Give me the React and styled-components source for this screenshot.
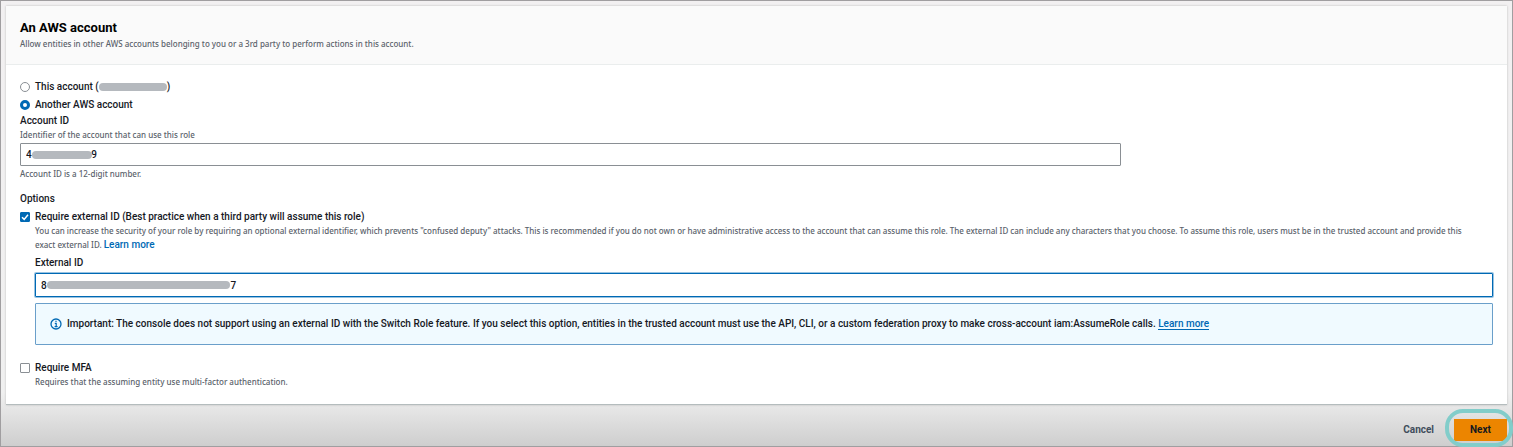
import React, { useState } from 'react'
import styled, { createGlobalStyle } from 'styled-components'

const COLORS = {
    text: '#16191f',
    secondary: '#5a626b',
    blue: '#0069b4',
    border: '#8a8f94',
    mask: '#b5b9be',
}

const FONTS = {
    body: "Roboto, 'Liberation Sans', sans-serif",
    small: "'Noto Sans', 'Open Sans', sans-serif",
}

const GlobalStyle = createGlobalStyle`
    * {
        box-sizing: border-box;
    }
    body {
        margin: 0;
        color: ${COLORS.text};
        font-family: ${FONTS.body};
        font-size: 10px;
        font-weight: 500;
        line-height: 14px;
    }
`

const Page = styled.div`
    display: flex;
    flex-direction: column;
    min-height: 100vh;
    padding: 5px 5px 0;
    border: 1px solid #a09ea0;
    background: linear-gradient(#f2f0f1 0, #f0f0f0 88%, #cecece 100%);
`

const Panel = styled.section`
    background: #fff;
    border-bottom: 1px solid #b4bcbd;
    box-shadow: 0 0 2px #bbb;
`

const PanelHeader = styled.header`
    padding: 14px 14px 12px;
    background: #fafafa;
    border-bottom: 1px solid #eaeded;
`

const Title = styled.h2`
    margin: 0;
    font-size: 13px;
    font-weight: 700;
    line-height: 16px;
    color: #000;
`

const Description = styled.p`
    margin: 0;
    padding-right: 20px;
    color: ${COLORS.secondary};
    font-family: ${FONTS.small};
    font-size: 8px;
    line-height: ${props => (props.$tall ? '16px' : '14px')};
`

const PanelBody = styled.div`
    padding: 15px 14px 15px;
`

const RadioGroup = styled.div`
    display: flex;
    flex-direction: column;
    gap: 4px;
    margin-bottom: 2px;
`

const Choice = styled.label`
    display: flex;
    align-items: center;
    gap: 5px;
`

const Radio = styled.input`
    appearance: none;
    flex: none;
    width: 10px;
    height: 10px;
    margin: 0;
    border: 1px solid ${COLORS.border};
    border-radius: 50%;
    background: #fff;
    &:checked {
        border: 3px solid ${COLORS.blue};
    }
`

const CheckWrapper = styled.span`
    display: grid;
    flex: none;
    > * {
        grid-area: 1 / 1;
    }
`

const CheckInput = styled.input`
    appearance: none;
    width: 10px;
    height: 10px;
    margin: 0;
    border: 1px solid ${COLORS.border};
    border-radius: 1px;
    background: #fff;
    &:checked {
        border-color: ${COLORS.blue};
        background: ${COLORS.blue};
    }
`

const Account = styled.span`
    display: flex;
    align-items: center;
`

const Mask = styled.span`
    width: ${props => props.$width}px;
    height: 8px;
    border-radius: 4px;
    background: ${COLORS.mask};
`

const Label = styled.label`
    display: block;
`

const InputWrapper = styled.div`
    position: relative;
    width: ${props => (props.$narrow ? 'calc(75% - 4px)' : '100%')};
    margin-top: ${props => (props.$narrow ? '1px' : '3px')};
    ${Mask} {
        position: absolute;
        top: 8px;
        left: 12px;
    }
`

const TextInput = styled.input`
    display: block;
    width: 100%;
    height: ${props => (props.$active ? '24px' : '23px')};
    padding: 0 5px;
    border: 1px solid ${props => (props.$active ? COLORS.blue : COLORS.border)};
    border-radius: 1px;
    box-shadow: ${props => (props.$active ? `0 0 0 1px ${COLORS.blue}66` : 'none')};
    background: #fff;
    color: ${COLORS.text};
    font: inherit;
    outline: none;
`

const Options = styled.div`
    margin: 10px 0 4px;
`

const Indented = styled.div`
    padding-left: 15px;
`

const ExternalId = styled.div`
    margin-top: 4px;
`

const Link = styled.a`
    color: ${COLORS.blue};
    font-family: ${FONTS.body};
    font-size: 10px;
    line-height: 12px;
    text-decoration: none;
    border-bottom: ${props => (props.$underlined ? `1px solid ${COLORS.blue}` : 'none')};
`

const Alert = styled.div`
    display: flex;
    align-items: center;
    gap: 5px;
    min-height: 42px;
    margin: 6px 0 16px;
    padding: 0 14px;
    border: 1px solid #6a9fca;
    border-radius: 1px;
    background: #f0faff;
    svg {
        flex: none;
    }
`

const Footer = styled.footer`
    display: flex;
    justify-content: flex-end;
    align-items: center;
    gap: 20px;
    padding-top: 14px;
`

const Button = styled.button`
    height: 22px;
    padding: 0;
    border: 0;
    background: transparent;
    color: #414d5c;
    font: inherit;
    font-weight: 700;
`

const PrimaryButton = styled(Button)`
    width: 53px;
    background: #ec8500;
    color: #16191f;
`

const Highlight = styled.div`
    position: relative;
    &::after {
        content: '';
        position: absolute;
        top: -10px;
        right: -6px;
        bottom: -6px;
        left: -9px;
        border: 4px solid #82cdca;
        border-radius: 18px;
        pointer-events: none;
    }
`

function Checkbox(props) {
    return (
        <CheckWrapper>
            <CheckInput type="checkbox" {...props} />
            {props.checked && (
                <svg width="10" height="10" viewBox="0 0 10 10" fill="none" pointerEvents="none">
                    <path d="M2 5.2 4.2 7.4 8 2.8" stroke="#fff" strokeWidth="1.5" />
                </svg>
            )}
        </CheckWrapper>
    )
}

function InfoIcon() {
    return (
        <svg width="12" height="12" viewBox="0 0 12 12" fill="none" stroke={COLORS.blue}>
            <circle cx="6" cy="6" r="5" strokeWidth="1.3" />
            <path d="M6 2.7v1.4M4.8 5.4H6.2V8.3M4.6 8.6h3" strokeWidth="1.2" />
        </svg>
    )
}

const blank = count => '\u00a0'.repeat(count)

function App() {
    const [account, setAccount] = useState('another')
    const [accountId, setAccountId] = useState(`4${blank(24)}9`)
    const [requireId, setRequireId] = useState(true)
    const [externalId, setExternalId] = useState(`8${blank(74)}7`)
    const [requireMfa, setRequireMfa] = useState(false)

    return (
        <>
            <GlobalStyle />
            <Page>
                <Panel>
                    <PanelHeader>
                        <Title>An AWS account</Title>
                        <Description $tall>
                            Allow entities in other AWS accounts belonging to you or a 3rd party to perform actions in this account.
                        </Description>
                    </PanelHeader>
                    <PanelBody>
                        <RadioGroup>
                            <Choice>
                                <Radio type="radio" name="account" checked={account === 'this'} onChange={() => setAccount('this')} />
                                <Account>This account (<Mask $width={68} />)</Account>
                            </Choice>
                            <Choice>
                                <Radio type="radio" name="account" checked={account === 'another'} onChange={() => setAccount('another')} />
                                Another AWS account
                            </Choice>
                        </RadioGroup>
                        <Label htmlFor="account-id">Account ID</Label>
                        <Description>Identifier of the account that can use this role</Description>
                        <InputWrapper $narrow>
                            <TextInput id="account-id" value={accountId} onChange={e => setAccountId(e.target.value)} />
                            <Mask $width={60} />
                        </InputWrapper>
                        <Description $tall>Account ID is a 12-digit number.</Description>
                        <Options>Options</Options>
                        <Choice>
                            <Checkbox checked={requireId} onChange={e => setRequireId(e.target.checked)} />
                            Require external ID (Best practice when a third party will assume this role)
                        </Choice>
                        <Indented>
                            <Description>
                                You can increase the security of your role by requiring an optional external identifier, which prevents "confused deputy" attacks. This is recommended if you do not own or have administrative access to the account that can assume this role. The external ID can include any characters that you choose. To assume this role, users must be in the trusted account and provide this exact external ID. <Link href="#">Learn more</Link>
                            </Description>
                            <ExternalId>
                                <Label htmlFor="external-id">External ID</Label>
                                <InputWrapper>
                                    <TextInput id="external-id" $active value={externalId} onChange={e => setExternalId(e.target.value)} />
                                    <Mask $width={183} />
                                </InputWrapper>
                            </ExternalId>
                            <Alert>
                                <InfoIcon />
                                <span>
                                    Important: The console does not support using an external ID with the Switch Role feature. If you select this option, entities in the trusted account must use the API, CLI, or a custom federation proxy to make cross-account iam:AssumeRole calls. <Link href="#" $underlined>Learn more</Link>
                                </span>
                            </Alert>
                        </Indented>
                        <Choice>
                            <Checkbox checked={requireMfa} onChange={e => setRequireMfa(e.target.checked)} />
                            Require MFA
                        </Choice>
                        <Indented>
                            <Description>Requires that the assuming entity use multi-factor authentication.</Description>
                        </Indented>
                    </PanelBody>
                </Panel>
                <Footer>
                    <Button type="button">Cancel</Button>
                    <Highlight>
                        <PrimaryButton type="button">Next</PrimaryButton>
                    </Highlight>
                </Footer>
            </Page>
        </>
    )
}

export default App
